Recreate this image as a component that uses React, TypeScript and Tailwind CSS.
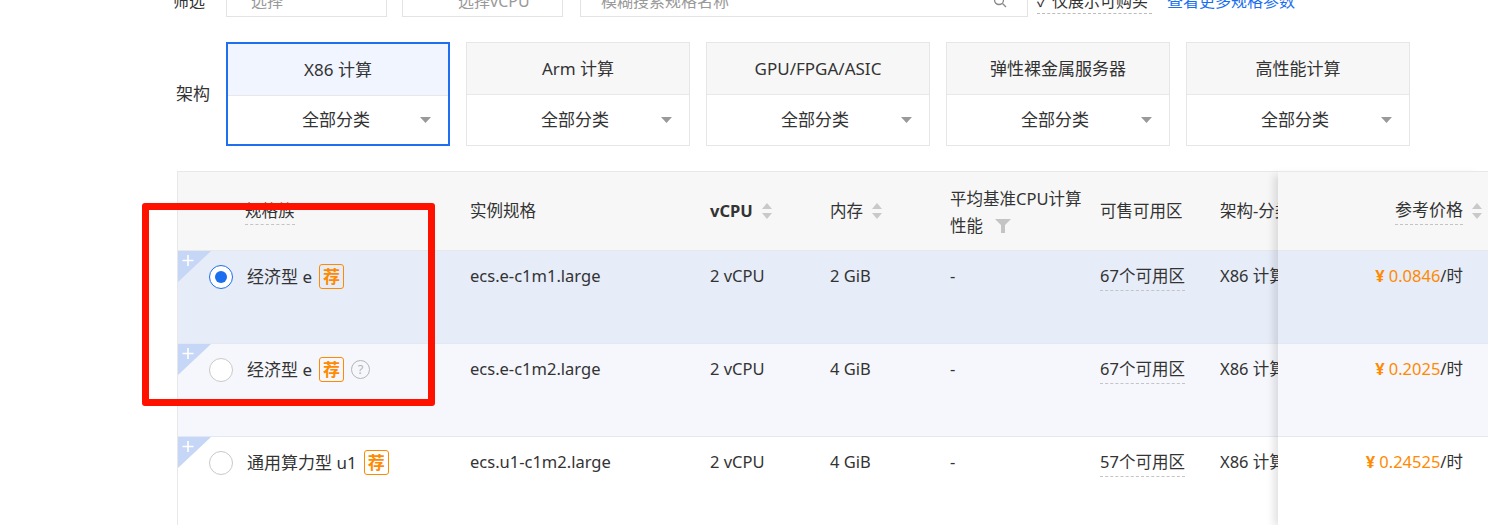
import React from "react";

const font = "font-['Noto_Sans','Noto_Sans_CJK_SC',sans-serif]";

const archs = [
  { name: "X86 计算", active: true },
  { name: "Arm 计算" },
  { name: "GPU/FPGA/ASIC" },
  { name: "弹性裸金属服务器" },
  { name: "高性能计算" },
];

const rows = [
  { family: "经济型 e", spec: "ecs.e-c1m1.large", cpu: "2 vCPU", mem: "2 GiB", zones: "67个可用区", price: "0.0846", checked: true, bg: "bg-[#e6ecf8]" },
  { family: "经济型 e", spec: "ecs.e-c1m2.large", cpu: "2 vCPU", mem: "4 GiB", zones: "67个可用区", price: "0.2025", help: true, bg: "bg-[#f5f7fc]" },
  { family: "通用算力型 u1", spec: "ecs.u1-c1m2.large", cpu: "2 vCPU", mem: "4 GiB", zones: "57个可用区", price: "0.24525", bg: "bg-white" },
];

const SortIcon = () => (
  <svg width="12" height="20" viewBox="0 0 12 20" className="ml-2 shrink-0">
    <path d="M6 2 L11 8 L1 8 Z" fill="#c9c9c9" />
    <path d="M6 18 L11 12 L1 12 Z" fill="#c9c9c9" />
  </svg>
);

const Caret = () => (
  <svg width="11" height="6" viewBox="0 0 11 6">
    <path d="M0 0 L11 0 L5.5 6 Z" fill="#9a9a9a" />
  </svg>
);

const Corner = () => (
  <svg width="33" height="31" viewBox="0 0 33 31" className="absolute left-0 top-0">
    <path d="M0 0 L33 0 L0 31 Z" fill="#c6d6f6" />
    <path d="M10 4 V15 M4.5 9.5 H15.5" stroke="#fff" strokeWidth="1.6" />
  </svg>
);

const Radio = ({ on }: { on?: boolean }) =>
  on ? (
    <span className="w-6 h-6 rounded-full border border-[#1a6ef0] bg-white flex items-center justify-center shrink-0">
      <span className="w-3 h-3 rounded-full bg-[#1a6ef0]" />
    </span>
  ) : (
    <span className="w-6 h-6 rounded-full border border-[#c9c9c9] bg-white shrink-0" />
  );

export default function App() {
  return (
    <div className={`relative w-[1490px] h-[525px] overflow-hidden bg-white text-[#333] ${font}`}>
      {/* filter row, scrolled mostly out of view */}
      <div className="-mt-[15px] h-8 flex items-center text-[16px] whitespace-nowrap">
        <span className="w-[53px] ml-[173px] text-[#333]">筛选</span>
        <div className="w-[161px] h-8 border border-[#e3e3e3] px-6 flex items-center text-[#999]">选择</div>
        <div className="w-[161px] h-8 border border-[#e3e3e3] ml-[15px] pl-[55px] flex items-center text-[#999]">选择vCPU</div>
        <div className="w-[448px] h-8 border border-[#e3e3e3] ml-[17px] px-5 flex items-center justify-between text-[#999]">
          <span>模糊搜索规格名称</span>
          <svg width="14" height="14" viewBox="0 0 14 14"><circle cx="6" cy="6" r="4.5" stroke="#888" fill="none" strokeWidth="1.3" /><path d="M9.5 9.5 L13 13" stroke="#888" strokeWidth="1.3" /></svg>
        </div>
        <span className="ml-[9px] border-b border-dashed border-[#bbb] leading-[24px] pr-1">✓ 仅展示可购买</span>
        <span className="ml-[15px] text-[#1a6ef0]">查看更多规格参数</span>
      </div>

      {/* architecture */}
      <div className="mt-[25px] flex items-center">
        <span className="ml-[176px] w-[50px] text-[17px]">架构</span>
        <div className="flex gap-4">
          {archs.map((a) => (
            <div
              key={a.name}
              className={`w-[224px] h-[104px] flex flex-col ${a.active ? "border-2 border-[#1f6fee]" : "border border-[#e6e6e6]"}`}
            >
              <div className={`h-[52px] flex items-center justify-center text-[17px] border-b border-[#e8e8e8] ${a.active ? "bg-[#f0f5ff]" : "bg-[#f7f7f7]"}`}>
                {a.name}
              </div>
              <div className="flex-1 bg-white flex items-center justify-between pl-[74px] pr-[17px] text-[17px]">
                <span>全部分类</span>
                <Caret />
              </div>
            </div>
          ))}
        </div>
      </div>

      {/* table */}
      <div className="mt-[25px] ml-[177px] w-[1311px] flex border-l border-[#e8e8e8] text-[16.5px]">
        <div className="w-[1101px] overflow-hidden">
          <div className="w-[1180px] h-[80px] flex items-center bg-[#f7f7f7] border-y border-[#e8e8e8]">
            <div className="w-[292px] pl-[67px]">
              <span className="border-b border-dashed border-[#c4c4c4] pb-[2px]">规格族</span>
            </div>
            <div className="w-[240px]">实例规格</div>
            <div className="w-[120px] flex items-center font-bold">vCPU<SortIcon /></div>
            <div className="w-[120px] flex items-center">内存<SortIcon /></div>
            <div className="w-[150px] leading-[27px] pt-[2px]">
              平均基准CPU计算
              <div className="flex items-center">
                性能
                <svg width="16" height="14" viewBox="0 0 16 14" className="ml-3"><path d="M0 0 H16 L10 6 V14 H6 V6 Z" fill="#c4c4c4" /></svg>
              </div>
            </div>
            <div className="w-[120px]">可售可用区</div>
            <div className="w-[120px]">架构-分类</div>
          </div>
          {rows.map((r, i) => (
            <div key={i} className={`relative w-[1180px] h-[93px] flex items-start pt-[13px] leading-[24px] border-b border-[#e4e8f0] ${r.bg}`}>
              <Corner />
              <div className="w-[292px] pl-[31px] flex items-center text-[17px]">
                <Radio on={r.checked} />
                <span className="ml-[14px]">{r.family}</span>
                <span className="ml-[7px] w-[25px] h-[25px] border border-[#ff8a00] rounded-[3px] text-[#ff8a00] font-bold text-[17px] flex items-center justify-center">荐</span>
                {r.help && (
                  <span className="ml-[7px] w-[19px] h-[19px] rounded-full border border-[#b5b5b5] text-[#b5b5b5] text-[13px] leading-none flex items-center justify-center">?</span>
                )}
              </div>
              <div className="w-[240px]">{r.spec}</div>
              <div className="w-[120px]">{r.cpu}</div>
              <div className="w-[120px]">{r.mem}</div>
              <div className="w-[150px]">-</div>
              <div className="w-[120px]">
                <span className="border-b border-dashed border-[#c4c4c4] pb-[3px]">{r.zones}</span>
              </div>
              <div className="w-[120px]">X86 计算</div>
            </div>
          ))}
        </div>

        {/* fixed price column */}
        <div className="w-[210px] relative shadow-[-8px_0_8px_-4px_rgba(0,0,0,0.12)]">
          <div className="h-[80px] flex items-center justify-end pr-[5px] bg-[#f7f7f7] border-y border-[#e8e8e8]">
            <span className="border-b border-dashed border-[#c4c4c4] pb-[2px] text-[17px]">参考价格</span>
            <SortIcon />
          </div>
          {rows.map((r, i) => (
            <div key={i} className={`h-[93px] flex justify-end pt-[13px] pr-[25px] leading-[24px] border-b border-[#e4e8f0] ${r.bg}`}>
              <span className="text-[#ff8a00] font-bold mr-[4px]">¥</span>
              <span className="text-[#ff8a00]">{r.price}</span>
              <span>/时</span>
            </div>
          ))}
        </div>
      </div>

      {/* annotation */}
      <div className="absolute left-[142px] top-[203px] w-[293px] h-[203px] border-[7px] border-[#ff1100] rounded-[3px] pointer-events-none" />
    </div>
  );
}
